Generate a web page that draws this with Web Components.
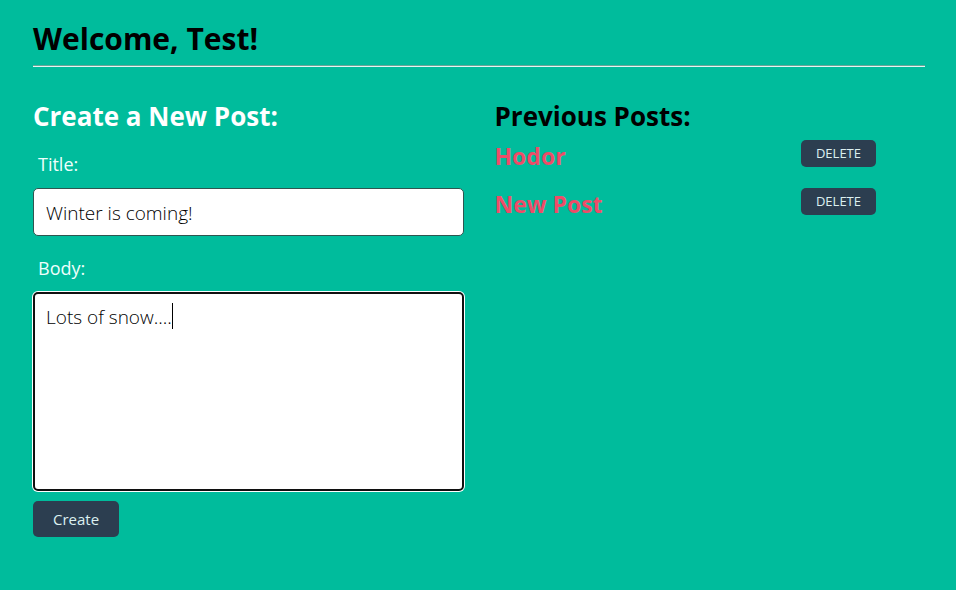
<!DOCTYPE html>
<html lang="en">
<head>
<meta charset="utf-8">
<meta name="viewport" content="width=device-width, initial-scale=1">
<title>Posts</title>
<style>
  body {
    margin: 0;
    min-height: 100vh;
    background: #00bc9c;
    color: #000;
    font-family: "Open Sans", "Noto Sans", sans-serif;
  }
</style>
</head>
<body>
<posts-dashboard name="Test">
  <post-form slot="form"></post-form>
  <post-list slot="list">
    <post-item>Hodor</post-item>
    <post-item>New Post</post-item>
  </post-list>
</posts-dashboard>

<script>
class BaseElement extends HTMLElement {
  constructor() {
    super();
    const template = document.createElement('template');
    template.innerHTML = this.constructor.markup;
    this.attachShadow({ mode: 'open' }).append(template.content.cloneNode(true));
  }
}

class PostsDashboard extends BaseElement {
  static markup = `
    <style>
      :host { display: block; padding: 16px 31px 32px 33px; }
      h1 {
        margin: 0 0 32px;
        padding-bottom: 4px;
        border-bottom: 1px solid #e4f5f1;
        box-shadow: inset 0 -1px #6aa598;
        font-size: 30px;
        line-height: 46px;
        font-weight: 700;
      }
      .columns {
        display: grid;
        grid-template-columns: minmax(0, 1fr) minmax(0, 1fr);
        gap: 31px;
        align-items: start;
      }
    </style>
    <h1>Welcome, <span></span>!</h1>
    <main class="columns">
      <slot name="form"></slot>
      <slot name="list"></slot>
    </main>`;
  connectedCallback() {
    this.shadowRoot.querySelector('span').textContent = this.getAttribute('name');
  }
}

class AppButton extends BaseElement {
  static markup = `
    <style>
      :host { display: inline-block; }
      button {
        display: block;
        border: 0;
        border-radius: 5px;
        padding: 0 20px;
        background: #2c3e50;
        color: #dcf0f0;
        font: 400 15px/36px "Open Sans", "Noto Sans", sans-serif;
      }
      :host([small]) button { padding: 0 15px; font-size: 13px; line-height: 27px; }
    </style>
    <button type="button"><slot></slot></button>`;
}

class PostForm extends BaseElement {
  static markup = `
    <style>
      :host { display: block; }
      h2 { margin: 0 0 18px; color: #fff; font-size: 26px; line-height: 34px; font-weight: 700; }
      label { display: block; padding-left: 5px; margin-bottom: 11px; color: #effffc; font-size: 18px; line-height: 26px; }
      input, textarea {
        display: block;
        box-sizing: border-box;
        width: 100%;
        margin: 0;
        padding: 11px 12px 9px;
        border: 1px solid #2f5550;
        border-radius: 5px;
        outline: 0;
        background: #fff;
        color: #000;
        font: 300 19px/26px "Open Sans", "Noto Sans", sans-serif;
      }
      input { height: 48px; margin-bottom: 19px; }
      textarea {
        height: 199px;
        padding: 10px 11px;
        border: 2px solid #101010;
        box-shadow: 0 0 0 1px #fff;
        resize: none;
        caret-color: transparent;
      }
      .editor { position: relative; margin-bottom: 10px; }
      .caret { position: absolute; left: 139px; top: 11px; width: 1px; height: 26px; background: #000; }
    </style>
    <h2>Create a New Post:</h2>
    <form>
      <label for="title">Title:</label>
      <input id="title" type="text" value="Winter is coming!">
      <label for="body">Body:</label>
      <div class="editor">
        <textarea id="body">Lots of snow....</textarea>
        <span class="caret"></span>
      </div>
      <app-button>Create</app-button>
    </form>`;
}

class PostList extends BaseElement {
  static markup = `
    <style>
      :host { display: block; }
      h2 { margin: 0 0 7px; font-size: 26px; line-height: 34px; font-weight: 700; }
      .items { display: grid; gap: 16px; padding-right: 49px; }
    </style>
    <h2>Previous Posts:</h2>
    <div class="items"><slot></slot></div>`;
}

class PostItem extends BaseElement {
  static markup = `
    <style>
      :host { display: flex; justify-content: space-between; align-items: flex-start; }
      a { color: #ee4c68; font-size: 23px; line-height: 32px; font-weight: 700; text-decoration: none; }
    </style>
    <a href="#"><slot></slot></a>
    <app-button small>DELETE</app-button>`;
}

customElements.define('app-button', AppButton);
customElements.define('post-item', PostItem);
customElements.define('post-list', PostList);
customElements.define('post-form', PostForm);
customElements.define('posts-dashboard', PostsDashboard);
</script>
</body>
</html>
